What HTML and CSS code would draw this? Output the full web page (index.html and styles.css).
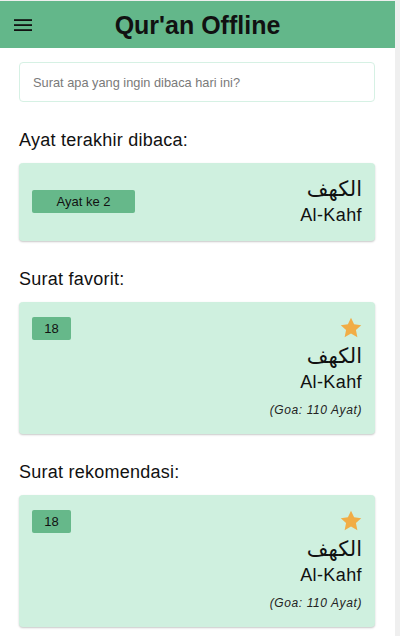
FILE: index.html
```html
<!DOCTYPE html>
<html lang="id">
<head>
<meta charset="utf-8">
<title>Qur'an Offline</title>
<link rel="stylesheet" href="styles.css">
</head>
<body>
<div class="page">
  <header class="topbar">
    <button class="menu" aria-label="Menu">
      <svg width="18" height="14" viewBox="0 0 18 14"><rect x="0" y="1.2" width="18" height="1.8" fill="#111"/><rect x="0" y="6.2" width="18" height="1.8" fill="#111"/><rect x="0" y="11.2" width="18" height="1.8" fill="#111"/></svg>
    </button>
    <h1 class="title">Qur'an Offline</h1>
    <span></span>
  </header>
  <main class="content">
    <input class="search" type="text" placeholder="Surat apa yang ingin dibaca hari ini?">

    <h2 class="section-title">Ayat terakhir dibaca:</h2>
    <div class="card card-last">
      <span class="badge badge-wide">Ayat ke 2</span>
      <div class="info">
        <div class="arabic">الكهف</div>
        <div class="latin">Al-Kahf</div>
      </div>
    </div>

    <h2 class="section-title">Surat favorit:</h2>
    <div class="card">
      <span class="badge">18</span>
      <div class="info">
        <svg class="star" width="22" height="21" viewBox="0 0 24 23"><path d="M12 0.8l3.4 7.2 7.8 0.9-5.8 5.4 1.6 7.8L12 18.2l-7 3.9 1.6-7.8L0.8 8.9l7.8-0.9z" fill="#f1ad46"/></svg>
        <div class="arabic">الكهف</div>
        <div class="latin">Al-Kahf</div>
        <div class="meta">(Goa: 110 Ayat)</div>
      </div>
    </div>

    <h2 class="section-title">Surat rekomendasi:</h2>
    <div class="card">
      <span class="badge">18</span>
      <div class="info">
        <svg class="star" width="22" height="21" viewBox="0 0 24 23"><path d="M12 0.8l3.4 7.2 7.8 0.9-5.8 5.4 1.6 7.8L12 18.2l-7 3.9 1.6-7.8L0.8 8.9l7.8-0.9z" fill="#f1ad46"/></svg>
        <div class="arabic">الكهف</div>
        <div class="latin">Al-Kahf</div>
        <div class="meta">(Goa: 110 Ayat)</div>
      </div>
    </div>
  </main>
</div>
</body>
</html>
```

FILE: styles.css
```css
html {
  background: #efefef;
  height: 100%;
}
body {
  margin: 0;
  padding-top: 1px;
  font-family: "Liberation Sans", Arial, sans-serif;
  color: #111;
}
.page {
  width: 395px;
  min-height: 635px;
  background: #fff;
  overflow: hidden;
}
.topbar {
  height: 47px;
  background: #63b78a;
  display: grid;
  grid-template-columns: 1fr auto 1fr;
  align-items: center;
}
.menu {
  background: none;
  border: 0;
  padding: 0 0 0 14px;
  display: flex;
  align-items: center;
  justify-self: start;
}
.title {
  margin: 0;
  font-size: 25px;
  font-weight: bold;
  color: #111;
  line-height: 30px;
}
.content {
  padding: 14px 20px 0 19px;
  display: flex;
  flex-direction: column;
}
.search {
  height: 40px;
  box-sizing: border-box;
  border: 1px solid #d6f1e4;
  border-radius: 4px;
  padding: 0 13px;
  font-family: "Liberation Sans", Arial, sans-serif;
  font-size: 12.8px;
  color: #333;
  outline: none;
}
.search::placeholder {
  color: #7a7a7a;
}
.section-title {
  margin: 27px 0 12px;
  font-size: 18px;
  font-weight: normal;
  line-height: 22px;
  letter-spacing: 0.25px;
  color: #111;
}
.card {
  background: #cff0df;
  border-radius: 4px;
  box-shadow: 0 1px 2px rgba(0,0,0,0.22);
  padding: 15px 13px 14px;
  display: flex;
  justify-content: space-between;
  align-items: flex-start;
}
.card-last {
  align-items: center;
  padding: 12px 13px 14px;
}
.badge {
  background: #66b88a;
  border-radius: 2px;
  font-size: 13px;
  line-height: 23px;
  height: 23px;
  width: 39px;
  text-align: center;
  color: #111;
}
.badge-wide {
  width: 103px;
}
.info {
  display: flex;
  flex-direction: column;
  align-items: flex-end;
}
.star {
  display: block;
  margin-bottom: 4px;
}
.arabic {
  font-family: "DejaVu Sans", sans-serif;
  font-size: 21px;
  line-height: 28px;
}
.latin {
  font-size: 18px;
  line-height: 24px;
  letter-spacing: 0.4px;
}
.meta {
  font-size: 12px;
  font-style: italic;
  line-height: 20px;
  letter-spacing: 0.6px;
  margin-top: 6px;
  color: #222;
}
```
